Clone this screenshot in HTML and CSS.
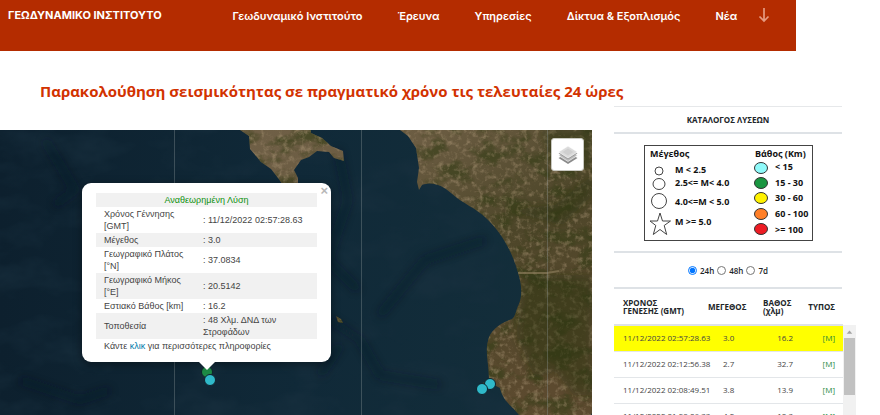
FILE: index.html
```
<!DOCTYPE html>
<html lang="el">
<head>
    <meta charset="UTF-8">
    <meta name="viewport" content="width=device-width, initial-scale=1.0">
    <title>Γεωδυναμικό Ινστιτούτο</title>
    <link rel="stylesheet" href="styles.css">
</head>
<body>
    <header class="site-header">
        <a href="#" class="brand">ΓΕΩΔΥΝΑΜΙΚΟ ΙΝΣΤΙΤΟΥΤΟ</a>
        <nav class="main-nav">
            <a href="#">Γεωδυναμικό Ινστιτούτο</a>
            <a href="#">Έρευνα</a>
            <a href="#">Υπηρεσίες</a>
            <a href="#">Δίκτυα &amp; Εξοπλισμός</a>
            <a href="#">Νέα</a>
        </nav>
        <button class="more-btn" aria-label="Περισσότερα">
            <svg width="12" height="16" viewBox="0 0 12 16"><path d="M6 1v13M1.500 9.500 6 14l4.500-4.500" fill="none" stroke="#e59a80" stroke-width="1.700"/></svg>
        </button>
    </header>

    <h1 class="page-title">Παρακολούθηση σεισμικότητας σε πραγματικό χρόνο τις τελευταίες 24 ώρες</h1>

    <main class="content">
        <section class="map">
            <svg class="map-tiles" viewBox="0 0 592 285" preserveAspectRatio="xMinYMin slice">
                <defs>
                    <linearGradient id="sea" x1="0" x2="1">
                        <stop offset="0" stop-color="#0d202e"/>
                        <stop offset="0.500" stop-color="#102938"/>
                        <stop offset="1" stop-color="#142f3b"/>
                    </linearGradient>
                    <linearGradient id="soil" x1="0" y1="0" x2="1" y2="0.800">
                        <stop offset="0" stop-color="#75644c"/>
                        <stop offset="0.450" stop-color="#6b5c42"/>
                        <stop offset="0.700" stop-color="#4d4629"/>
                        <stop offset="1" stop-color="#5c4a2f"/>
                    </linearGradient>
                    <filter id="waves" x="0" y="0" width="100%" height="100%">
                        <feTurbulence type="fractalNoise" baseFrequency="0.018 0.030" numOctaves="4" seed="8"/>
                        <feColorMatrix values="0 0 0 0 0.010  0 0 0 0 0.030  0 0 0 0 0.050  2.600 0 0 0 -1.150"/>
                    </filter>
                    <filter id="forest" x="0" y="0" width="100%" height="100%">
                        <feTurbulence type="fractalNoise" baseFrequency="0.040 0.060" numOctaves="5" seed="21"/>
                        <feColorMatrix values="0 0 0 0 0.040  0 0 0 0 0.050  0 0 0 0 0.010  4 0 0 0 -1.900"/>
                    </filter>
                    <filter id="rock" x="0" y="0" width="100%" height="100%">
                        <feTurbulence type="fractalNoise" baseFrequency="0.180" numOctaves="4" seed="5"/>
                        <feColorMatrix values="0 0 0 0 0.400  0 0 0 0 0.300  0 0 0 0 0.180  0 3 0 0 -1.450"/>
                    </filter>
                    <filter id="soft"><feGaussianBlur stdDeviation="4"/></filter>
                    <clipPath id="coast">
                        <path d="M400 0l8 6 8 12 3 20-2 14 2 8 3-5c10-4 20 0 29 8 12 11 25 15 35 25 16 15 27 35 33 58 3 12 3 20 0 28-4 8-3 12-7 15-14 5-22 12-24 22-3 10 1 25 1 38l1 4 10 5c3 12 10 17 13 20l8 9h69l4-8 6-4V0z"/>
                        <path d="M240 0l9 6 1 13 6 7 5 6 10 7 7 9 5 7h15v-7l-4-8 7-10 8-3 8-6 12 1 5 6 10 3-1-10-12-5-9-8-11-5V0z"/>
                        <path d="M336 186l5 3 2 4-5-1zM480 254l5-2-1 4z"/>
                    </clipPath>
                </defs>
                <rect width="592" height="285" fill="url(#sea)"/>
                <rect width="592" height="285" filter="url(#waves)" opacity="0.600"/>
                <g fill="none" stroke="#081722" stroke-width="5" opacity="0.600" filter="url(#soft)">
                    <path d="M45 10l30 50-20 15M338 20l10 50-20 60 30 30M380 185l45-55 60-20M330 190l30 20 20 35 60 10M20 250l60 20 30-10M340 215l-20 30"/>
                </g>
                <g clip-path="url(#coast)">
                    <rect width="592" height="285" fill="url(#soil)"/>
                    <rect width="592" height="285" filter="url(#forest)" opacity="0.650"/>
                    <rect width="592" height="285" filter="url(#rock)" opacity="0.500"/>
                    <g fill="#25300f" opacity="0.450" filter="url(#soft)">
                        <path d="M540 0h52v38l-40-8zM505 80l50-5 37-30v20l-30 30zM525 145l67 0v120l-18 0-20-25-18 10-20-45z"/>
                    </g>
                    <path d="M518 143h29l12-2" fill="none" stroke="#8a7a5a" stroke-width="2" opacity="0.700"/>
                </g>
                <path d="M174.500 0v285M361.500 0v285M547.500 0v285" stroke="#8f9a9c" opacity="0.350"/>
            </svg>

            <svg class="map-pins" width="592" height="285" viewBox="0 0 592 285">
                <g stroke="#10222c" stroke-width="1">
                    <circle cx="207" cy="242" r="5.500" fill="#1d8b45"/>
                    <circle cx="210" cy="250" r="5.500" fill="#2fb9c9"/>
                    <circle cx="490" cy="254" r="5.500" fill="#2fb9c9"/>
                    <circle cx="482" cy="259" r="5.500" fill="#2fb9c9"/>
                </g>
            </svg>

            <button class="layers-btn" aria-label="Επίπεδα">
                <svg width="22" height="22" viewBox="0 0 22 22">
                    <path d="M1.500 14l9.500 6 9.500-6-9.500-5z" fill="#8b8b8b"/>
                    <path d="M1.500 11.500l9.500 6 9.500-6-9.500-5z" fill="#bdbdbd" stroke="#fff" stroke-width="0.600"/>
                    <path d="M1.500 9.500l9.500 6 9.500-6-9.500-5z" fill="#9c9c9c"/>
                    <path d="M1.500 8 11 2l9.500 6-9.500 6z" fill="#dcdcdc" stroke="#fff" stroke-width="0.600"/>
                    <path d="M5.500 8 11 4.500 16.500 8 11 11.500z" fill="#cfcfcf"/>
                </svg>
            </button>

            <div class="popup">
                <button class="popup-close" aria-label="Κλείσιμο">×</button>
                <table class="popup-table">
                    <colgroup><col class="name-col"><col></colgroup>
                    <tr><th colspan="2">Αναθεωρημένη Λύση</th></tr>
                    <tr><td>Χρόνος Γέννησης [GMT]</td><td>: 11/12/2022 02:57:28.63</td></tr>
                    <tr><td>Μέγεθος</td><td>: 3.0</td></tr>
                    <tr><td>Γεωγραφικό Πλάτος [°N]</td><td>: 37.0834</td></tr>
                    <tr><td>Γεωγραφικό Μήκος [°E]</td><td>: 20.5142</td></tr>
                    <tr><td>Εστιακό Βάθος [km]</td><td>: 16.2</td></tr>
                    <tr><td>Τοποθεσία</td><td>: 48 Χλμ. ΔΝΔ των Στροφάδων</td></tr>
                    <tr><td colspan="2">Κάντε <a href="#">κλικ</a> για περισσότερες πληροφορίες</td></tr>
                </table>
            </div>
        </section>

        <aside class="sidebar">
            <h2 class="catalog-title">ΚΑΤΑΛΟΓΟΣ ΛΥΣΕΩΝ</h2>
            <div class="legend">
                <svg width="169" height="96" viewBox="0 0 169 96">
                    <rect x="0.500" y="0.500" width="168" height="95" fill="#fff" stroke="#444"/>
                    <g fill="none" stroke="#444">
                        <circle cx="15" cy="26" r="4"/>
                        <ellipse cx="15" cy="39" rx="6" ry="5.500"/>
                        <circle cx="15" cy="56" r="7.500"/>
                        <path d="M16 68l2.500 8h8l-6.300 4.500 2.500 9-6.700-5-6.700 5 2.500-9L6 76h7.500z"/>
                    </g>
                    <g stroke="#333">
                        <ellipse cx="117" cy="23" rx="6.500" ry="5.500" fill="#8ffafa"/>
                        <ellipse cx="117" cy="38" rx="6.500" ry="5.500" fill="#1a9641"/>
                        <ellipse cx="117" cy="53" rx="6.500" ry="5.500" fill="#fff200"/>
                        <ellipse cx="117" cy="69" rx="6.500" ry="5.500" fill="#ff7f27"/>
                        <ellipse cx="117" cy="84" rx="6.500" ry="5.500" fill="#ed1c24"/>
                    </g>
                    <g class="legend-text">
                        <text x="6" y="12">Μέγεθος</text>
                        <text x="31" y="28">M &lt; 2.5</text>
                        <text x="31" y="41">2.5&lt;= M&lt; 4.0</text>
                        <text x="31" y="60">4.0&lt;=M &lt; 5.0</text>
                        <text x="31" y="80">M &gt;= 5.0</text>
                        <text x="111" y="12">Βάθος (Km)</text>
                        <text x="131" y="25">&lt; 15</text>
                        <text x="131" y="41">15 - 30</text>
                        <text x="131" y="56">30 - 60</text>
                        <text x="131" y="72">60 - 100</text>
                        <text x="131" y="88">&gt;= 100</text>
                    </g>
                </svg>
            </div>
            <form class="period">
                <input type="radio" name="period" id="p24" checked><label for="p24">24h</label>
                <input type="radio" name="period" id="p48"><label for="p48">48h</label>
                <input type="radio" name="period" id="p7"><label for="p7">7d</label>
            </form>
            <div class="list">
                <table class="events">
                    <thead>
                        <tr><th>ΧΡΟΝΟΣ<br>ΓΕΝΕΣΗΣ (GMT)</th><th>ΜΕΓΕΘΟΣ</th><th>ΒΑΘΟΣ<br>(χλμ)</th><th>ΤΥΠΟΣ</th></tr>
                    </thead>
                    <tbody>
                        <tr class="selected"><td>11/12/2022 02:57:28.63</td><td>3.0</td><td>16.2</td><td>[M]</td></tr>
                        <tr><td>11/12/2022 02:12:56.38</td><td>2.7</td><td>32.7</td><td>[M]</td></tr>
                        <tr><td>11/12/2022 02:08:49.51</td><td>3.8</td><td>13.9</td><td>[M]</td></tr>
                        <tr><td>11/12/2022 01:58:06.33</td><td>4.2</td><td>10.3</td><td>[M]</td></tr>
                    </tbody>
                </table>
                <div class="scrollbar">
                    <svg width="14" height="13" viewBox="0 0 14 13"><path d="M4 9l3-3.500L10 9z" fill="#a3a3a3"/></svg>
                    <div class="thumb"></div>
                </div>
            </div>
        </aside>
    </main>
</body>
</html>
```

FILE: styles.css
```
* {
    box-sizing: border-box;
}

body {
    margin: 0;
    height: 100vh;
    display: flex;
    flex-direction: column;
    overflow: hidden;
    background-color: #fff;
    color: #212529;
    font-family: "Open Sans", "Noto Sans", sans-serif;
}

button {
    padding: 0;
    border: none;
    background: none;
    cursor: pointer;
}

.site-header {
    display: flex;
    align-items: flex-start;
    flex: none;
    width: 90.5%;
    height: 51px;
    padding: 7px 26px 0 8px;
    background-color: #b42c00;
    font-family: Inter, "Noto Sans", sans-serif;
}

.site-header a {
    color: #fff;
    text-decoration: none;
    white-space: nowrap;
}

.brand {
    font-size: 11px;
    font-weight: 700;
    line-height: 16px;
}

.main-nav {
    display: flex;
    gap: 35px;
    margin-left: auto;
    font-size: 11px;
    font-weight: 600;
    line-height: 18px;
}

.more-btn {
    height: 18px;
    margin-left: 21px;
}

.page-title {
    flex: none;
    margin: 0;
    padding: 28px 0 3px 40px;
    color: #d23200;
    font-family: "Open Sans", "Noto Sans", sans-serif;
    font-size: 15px;
    font-weight: 700;
    line-height: 24px;
}

.content {
    display: grid;
    grid-template-columns: minmax(0, 1fr) 242px;
    grid-template-rows: minmax(0, 1fr);
    gap: 22px;
    flex: 1;
    min-height: 0;
    padding-right: 24px;
}

.map {
    position: relative;
    margin-top: 24px;
    overflow: hidden;
    background-color: #102938;
}

.map-tiles {
    display: block;
    width: 100%;
    height: 100%;
}

.map-pins {
    position: absolute;
    top: 0;
    left: 0;
}

.layers-btn {
    position: absolute;
    top: 8px;
    right: 8px;
    width: 33px;
    height: 33px;
    display: flex;
    align-items: center;
    justify-content: center;
    background-color: #fff;
    border: 1px solid #c8c8c0;
    border-radius: 3px;
}

.popup {
    position: absolute;
    top: 53px;
    left: 82px;
    width: 249px;
    padding: 10px 14px 9px;
    background-color: #fff;
    border-radius: 9px;
    box-shadow: 0 2px 9px rgba(0, 0, 0, 0.4);
    color: #444;
    font-family: "Liberation Sans", Arial, sans-serif;
    font-size: 9px;
    line-height: 12px;
}

.popup::after {
    content: "";
    position: absolute;
    top: 100%;
    left: 117px;
    border: 8px solid transparent;
    border-top-color: #fff;
    border-bottom: none;
}

.popup-close {
    position: absolute;
    top: 1px;
    right: 3px;
    color: #b8b8b8;
    font: bold 13px/14px "Liberation Sans", sans-serif;
}

.popup-table {
    width: 100%;
    border-collapse: collapse;
    table-layout: fixed;
}

.name-col {
    width: 107px;
}

.popup-table tr:nth-child(odd) {
    background-color: #f1f1f1;
}

.popup-table th {
    padding: 1px 8px;
    color: #0d900d;
    font-weight: normal;
    text-align: center;
}

.popup-table td {
    padding: 1px 16px 1px 8px;
}

.popup-table td + td {
    padding: 1px 8px 1px 0;
}

.popup a {
    color: #0078a8;
    text-decoration: none;
}

.sidebar {
    min-width: 0;
    font-size: 8px;
}

.catalog-title {
    margin: 0 14px 0 0;
    padding: 7px 0 6px;
    border-top: 1px solid #e6e8ea;
    border-bottom: 2px solid #dee2e6;
    font-size: 8px;
    font-weight: 700;
    line-height: 12px;
    text-align: center;
}

.legend {
    margin-right: 14px;
    padding: 11px 0 10px 30px;
    border-bottom: 2px solid #dee2e6;
}

.legend svg {
    display: block;
}

.legend-text {
    fill: #111;
    font-family: "Open Sans", "Noto Sans", sans-serif;
    font-size: 9px;
    font-weight: 700;
}

.period {
    display: flex;
    align-items: center;
    justify-content: center;
    gap: 3px;
    height: 36px;
    margin-right: 14px;
    border-bottom: 2px solid #dee2e6;
    font-weight: 600;
}

.period input {
    width: 9px;
    height: 9px;
    margin: 0;
}

.list {
    display: flex;
    align-items: flex-start;
}

.events {
    flex: 1;
    width: 100%;
    border-collapse: collapse;
    table-layout: fixed;
    line-height: 8px;
}

.events th {
    height: 36px;
    padding: 0;
    border-bottom: 2px solid #dee2e6;
    font-weight: 700;
    text-align: left;
    vertical-align: middle;
    white-space: nowrap;
}

.events td {
    height: 26px;
    padding: 0;
    border-bottom: 1px solid #e3e6e9;
    color: #444;
    white-space: nowrap;
}

.events th:first-child,
.events td:first-child {
    width: 94px;
    padding-left: 9px;
}

.events th:nth-child(2) {
    width: 55px;
}

.events td:nth-child(2) {
    padding-left: 15px;
}

.events th:nth-child(3) {
    width: 30px;
}

.events td:nth-child(3) {
    text-align: right;
}

.events th:last-child,
.events td:last-child {
    padding-right: 8px;
    text-align: right;
}

.events td:last-child {
    color: #2b8a3e;
}

.events .selected {
    background-color: #ff0;
}

.scrollbar {
    flex: none;
    width: 13px;
    height: 300px;
    margin-top: 36px;
    background-color: #f1f1f1;
}

.scrollbar svg {
    display: block;
    width: 100%;
}

.thumb {
    height: 57px;
    margin: 0 1px;
    background-color: #c1c1c1;
}
```
